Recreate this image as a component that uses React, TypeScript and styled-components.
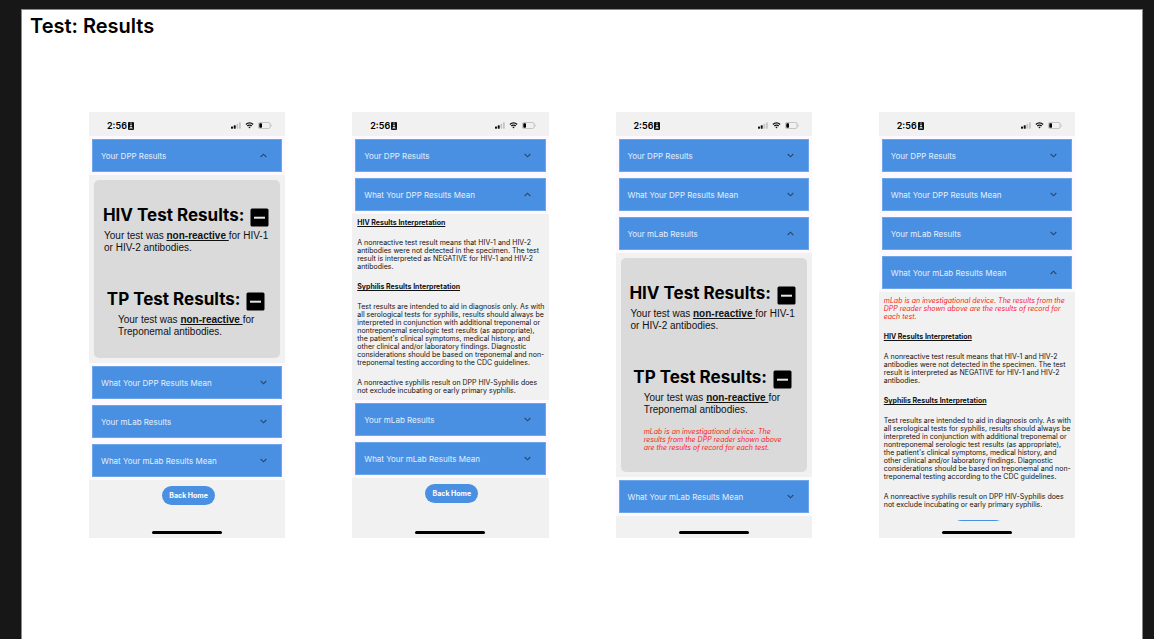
import React, { useState } from "react";
import styled, { createGlobalStyle } from "styled-components";

const GlobalStyle = createGlobalStyle`
  * { box-sizing: border-box; }
  body {
    margin: 0;
    background: #171717;
    font-family: Inter, "Liberation Sans", sans-serif;
    color: #111;
  }
  h1, h2, h3, p { margin: 0; }
  button { font-family: inherit; border: 0; cursor: pointer; }
`;

const Page = styled.main`
  min-height: 100vh;
  display: flex;
  padding: 9px 11px 0 21px;
`;

const Slide = styled.section`
  flex: 1;
  background: #fff;
  border: 1px solid #8a8a8a;
  border-bottom: 0;
`;

const Title = styled.h1`
  padding: 3px 8px 1px;
  font-size: 20px;
  line-height: 26px;
  font-weight: 600;
  color: #000;
`;

const Phones = styled.div`
  display: grid;
  grid-template-columns: repeat(4, minmax(0, 1fr));
  gap: 67px;
  padding: 72px 67px;
`;

const Phone = styled.article`
  height: 426px;
  display: flex;
  flex-direction: column;
  background: #f1f1f1;
`;

const StatusBar = styled.header`
  flex: none;
  height: 24px;
  display: flex;
  align-items: center;
  justify-content: space-between;
  padding: 3px 13px 0 18px;
`;

const Clock = styled.span`
  display: flex;
  align-items: center;
  gap: 1px;
  font-size: 9px;
  line-height: 12px;
  font-weight: 600;
  color: #000;
`;

const Indicators = styled.span`
  display: flex;
  align-items: center;
  gap: 4px;
`;

const Scroll = styled.div`
  flex: 1;
  min-height: 0;
  overflow: hidden;
`;

const Row = styled.h2`
  display: flex;
  padding: 3px;
  background: #fdf9fe;
`;

const RowButton = styled.button`
  flex: 1;
  height: 33px;
  display: flex;
  align-items: center;
  justify-content: space-between;
  padding: 0 14px 0 8px;
  border: 1px solid #6ea7e9;
  background: #4a90e2;
  color: #e4effc;
  font-size: 8px;
  line-height: 12px;
`;

const Panel = styled.div`
  padding: 5px;
`;

const Card = styled.div`
  display: flex;
  flex-direction: column;
  align-items: center;
  gap: 30px;
  padding: 20px 2px 20px 0;
  border-radius: 5px;
  background: #dadada;
`;

const Result = styled.section`
  display: flex;
  flex-direction: column;
  align-items: center;
`;

const ResultTitle = styled.h3`
  display: flex;
  align-items: center;
  gap: 6px;
  font-size: 17px;
  line-height: 30px;
  font-weight: 700;
  color: #000;
  white-space: nowrap;
  svg { margin-top: 4px; }
`;

const ResultText = styled.p`
  font-family: "Liberation Sans", sans-serif;
  font-size: 10px;
  line-height: 12px;
  white-space: pre;
  b { text-decoration: underline; font-weight: 700; }
`;

const Article = styled.div`
  display: flex;
  flex-direction: column;
  gap: 12px;
`;

const Copy = styled.p`
  font-size: 7px;
  line-height: 8px;
  white-space: pre;
`;

const Heading = styled.h3`
  font-size: 7px;
  line-height: 8px;
  font-weight: 700;
  text-decoration: underline;
`;

const Notice = styled(Copy)<{ $spaced?: boolean }>`
  color: #fb1a1f;
  font-style: italic;
  margin-top: ${(p) => (p.$spaced ? "12px" : "0")};
`;

const Actions = styled.div`
  display: flex;
  justify-content: center;
  padding: 6px 0 0 3px;
`;

const HomeButton = styled.button`
  width: 53px;
  height: 19px;
  padding: 0;
  border-radius: 10px;
  background: #4a90e2;
  color: #fff;
  font-size: 7px;
  line-height: 10px;
  font-weight: 700;
`;

const HomeBar = styled.footer`
  flex: none;
  height: 17px;
  padding-top: 10px;
  &::after {
    content: "";
    display: block;
    width: 70px;
    height: 3px;
    margin: 0 auto;
    border-radius: 2px;
    background: #000;
  }
`;

const Chevron = ({ up }: { up: boolean }) => (
  <svg width="7" height="5" viewBox="0 0 7 5" fill="none" stroke="#2c4669" strokeWidth="1.1" aria-hidden="true">
    <path d={up ? "M.7 4 3.5 1.2 6.3 4" : "M.7 1 3.5 3.8 6.3 1"} />
  </svg>
);

const MinusBadge = () => (
  <svg width="19" height="19" viewBox="0 0 19 19" aria-hidden="true">
    <rect x=".5" y=".5" width="18" height="18" rx="1.5" fill="#000" />
    <rect x="4" y="8.7" width="11" height="2" fill="#e6e6e6" />
  </svg>
);

const Status = () => (
  <StatusBar>
    <Clock>
      2:56
      <svg width="6" height="8" viewBox="0 0 6 8" aria-hidden="true">
        <rect width="6" height="8" rx="1" fill="#111" />
        <rect x="2" y=".7" width="2" height=".7" fill="#ddd" />
        <circle cx="3" cy="3.6" r="1" fill="#ddd" />
        <path d="M1.2 6.6c0-2.2 3.6-2.2 3.6 0z" fill="#ddd" />
      </svg>
    </Clock>
    <Indicators>
      <svg width="10" height="7" viewBox="0 0 10 7" aria-hidden="true">
        <rect x="0" y="4.5" width="2" height="2.2" rx=".4" fill="#111" />
        <rect x="2.7" y="3.3" width="2" height="3.4" rx=".4" fill="#111" />
        <rect x="5.4" y="1.7" width="1.8" height="5" rx=".4" fill="#c6c6c6" />
        <rect x="8" y=".2" width="1.8" height="6.5" rx=".4" fill="#c6c6c6" />
      </svg>
      <svg width="9" height="7" viewBox="0 0 8 7" fill="none" stroke="#111" strokeWidth="1.3" aria-hidden="true">
        <path d="M.4 2.5C2.4.4 5.6.4 7.6 2.5" />
        <path d="M1.8 4C3 2.7 5 2.7 6.2 4" />
        <path d="M2.9 5.1 4 6.4l1.1-1.3C4.5 4.5 3.5 4.5 2.9 5.1z" fill="#111" stroke="none" />
      </svg>
      <svg width="14" height="7" viewBox="0 0 14 7" aria-hidden="true">
        <rect x=".4" y=".4" width="11.7" height="6.2" rx="1.8" fill="none" stroke="#b4b4b4" strokeWidth=".8" />
        <rect x="1.3" y="1.2" width="2.7" height="4.6" rx=".7" fill="#000" />
        <path d="M12.9 2.3v2.4c.9-.4.9-2 0-2.4z" fill="#b4b4b4" />
      </svg>
    </Indicators>
  </StatusBar>
);

const Results = ({ notice }: { notice?: boolean }) => (
  <Card>
    <Result>
      <ResultTitle>HIV Test Results: <MinusBadge /></ResultTitle>
      <ResultText>Your test was <b>non-reactive </b>for HIV-1{"\n"}or HIV-2 antibodies.</ResultText>
    </Result>
    <Result>
      <ResultTitle>TP Test Results: <MinusBadge /></ResultTitle>
      <div>
        <ResultText>Your test was <b>non-reactive </b>for{"\n"}Treponemal antibodies.</ResultText>
        {notice && (
          <Notice $spaced>
            {"mLab is an investigational device. The\nresults from the DPP reader shown above\nare the results of record for each test."}
          </Notice>
        )}
      </div>
    </Result>
  </Card>
);

const Interpretation = ({ notice }: { notice?: boolean }) => (
  <Article>
    {notice && (
      <Notice>
        {"mLab is an investigational device. The results from the\nDPP reader shown above are the results of record for\neach test."}
      </Notice>
    )}
    <Heading>HIV Results Interpretation</Heading>
    <Copy>
      {"A nonreactive test result means that HIV-1 and HIV-2\nantibodies were not detected in the specimen. The test\nresult is interpreted as NEGATIVE for HIV-1 and HIV-2\nantibodies."}
    </Copy>
    <Heading>Syphilis Results Interpretation</Heading>
    <Copy>
      {"Test results are intended to aid in diagnosis only. As with\nall serological tests for syphilis, results should always be\ninterpreted in conjunction with additional treponemal or\nnontreponemal serologic test results (as appropriate),\nthe patient's clinical symptoms, medical history, and\nother clinical and/or laboratory findings. Diagnostic\nconsiderations should be based on treponemal and non-\ntreponemal testing according to the CDC guidelines."}
    </Copy>
    <Copy>{"A nonreactive syphilis result on DPP HIV-Syphilis does\nnot exclude incubating or early primary syphilis."}</Copy>
  </Article>
);

const sections = [
  { title: "Your DPP Results", body: <Results /> },
  { title: "What Your DPP Results Mean", body: <Interpretation /> },
  { title: "Your mLab Results", body: <Results notice /> },
  { title: "What Your mLab Results Mean", body: <Interpretation notice /> },
];

const ResultsPhone = ({ initial }: { initial: number }) => {
  const [open, setOpen] = useState(initial);
  return (
    <Phone>
      <Status />
      <Scroll>
        {sections.map(({ title, body }, i) => (
          <React.Fragment key={title}>
            <Row>
              <RowButton type="button" aria-expanded={open === i} onClick={() => setOpen(open === i ? -1 : i)}>
                {title}
                <Chevron up={open === i} />
              </RowButton>
            </Row>
            {open === i && <Panel>{body}</Panel>}
          </React.Fragment>
        ))}
        {open !== 2 && (
          <Actions>
            <HomeButton type="button" aria-label="Back Home">{open !== 3 && "Back Home"}</HomeButton>
          </Actions>
        )}
      </Scroll>
      <HomeBar />
    </Phone>
  );
};

export default function App() {
  return (
    <>
      <GlobalStyle />
      <Page>
        <Slide>
          <Title>Test: Results</Title>
          <Phones>
            {sections.map(({ title }, i) => (
              <ResultsPhone key={title} initial={i} />
            ))}
          </Phones>
        </Slide>
      </Page>
    </>
  );
}
